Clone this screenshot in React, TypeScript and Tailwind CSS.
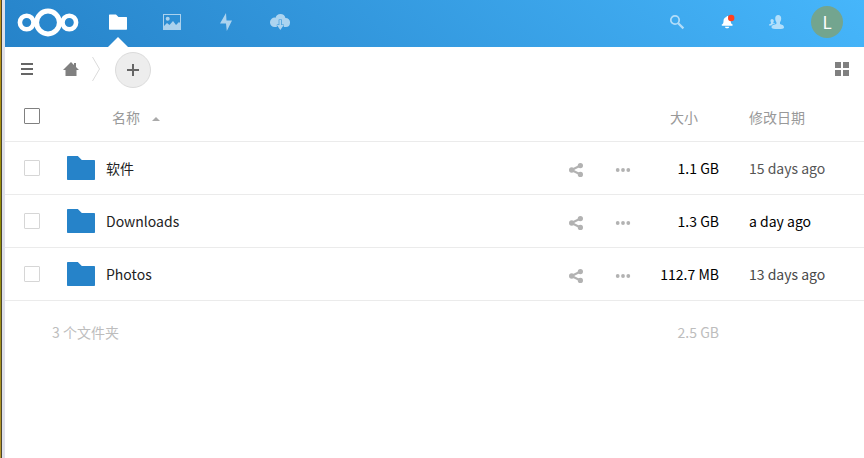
import type { ReactNode } from 'react';

type Entry = { name: string; size: string; modified: string; tone: string };

const entries: Entry[] = [
  { name: '软件', size: '1.1 GB', modified: '15 days ago', tone: 'text-[#555555]' },
  { name: 'Downloads', size: '1.3 GB', modified: 'a day ago', tone: 'text-black' },
  { name: 'Photos', size: '112.7 MB', modified: '13 days ago', tone: 'text-[#494949]' },
];

function NavItem({ label, active, children }: { label: string; active?: boolean; children: ReactNode }) {
  return (
    <a
      href="#"
      aria-label={label}
      className={`relative flex h-full w-[54px] items-center justify-center ${active ? 'opacity-100' : 'opacity-60'}`}
    >
      {children}
      {active && (
        <svg className="absolute bottom-0 left-1/2 -translate-x-1/2" width="20" height="10" viewBox="0 0 20 10" fill="#fff">
          <path d="M10 0l10 10H0z" />
        </svg>
      )}
    </a>
  );
}

function Logo() {
  return (
    <svg width="62" height="30" viewBox="0 0 62 30" fill="none" stroke="#fff">
      <circle cx="31" cy="15.500" r="11.400" strokeWidth="5" />
      <circle cx="9.700" cy="15.500" r="6.800" strokeWidth="4.600" />
      <circle cx="52.300" cy="15.500" r="6.800" strokeWidth="4.600" />
    </svg>
  );
}

function Header() {
  return (
    <header className="flex h-[47px] items-center bg-linear-40 from-[#2683c9] to-[#46b6fb] pl-3">
      <a href="#" aria-label="Nextcloud" className="mr-3 flex h-full w-[62px] items-center pb-[3px]">
        <Logo />
      </a>
      <nav className="flex h-full flex-1">
        <NavItem label="Files" active>
          <svg className="mb-1" width="20" height="20" viewBox="0 0 20 20" fill="#fff">
            <path d="M1.600 2.500a.6.600 0 0 0-.6.600v14a.6.600 0 0 0 .6.600h16.800a.6.600 0 0 0 .6-.6V5.600a.6.600 0 0 0-.6-.6H10.500L8 2.500z" />
          </svg>
        </NavItem>
        <NavItem label="Gallery">
          <svg className="mb-1" width="20" height="20" viewBox="0 0 20 20" fill="#fff">
            <path fillRule="evenodd" d="M1 2h18v16H1zM2 3v14h16V3z" />
            <circle cx="5.700" cy="6.700" r="2" />
            <path d="M2 17v-3l3-3 2.500 2L11 9l3 4 3-3 1 1v6z" />
          </svg>
        </NavItem>
        <NavItem label="Activity">
          <svg className="mb-1" width="20" height="20" viewBox="0 0 20 20" fill="#fff">
            <path d="M10 1L4 11.500h6L10.800 19 16 8.500h-5.500z" />
          </svg>
        </NavItem>
        <NavItem label="Downloader">
          <svg className="mb-1" width="20" height="20" viewBox="0 0 20 20" fill="#fff">
            <path d="M10.500 2a5 5 0 0 0-4.900 3.700A4.600 4.600 0 0 0 0 10.400 4.600 4.600 0 0 0 4.600 15h2.200v-2.500h1.900V7.400h3.200v5.100h1.900V15h2a4.300 4.300 0 0 0 4.200-4.300A4.400 4.400 0 0 0 15.400 6a5 5 0 0 0-4.900-4z" />
            <path d="M9.300 8h2v5h2.500l-3.500 5-3.500-5h2.500z" />
          </svg>
        </NavItem>
      </nav>
      <div className="flex h-full items-center pb-[3px]">
        <button aria-label="Search" className="flex h-full w-[50px] items-center justify-center opacity-60">
          <svg width="16" height="16" viewBox="0 0 16 16" fill="none" stroke="#fff">
            <circle cx="6" cy="6" r="4.200" strokeWidth="1.700" />
            <path d="M9.200 9.200l5.200 5.200" strokeWidth="2.200" />
          </svg>
        </button>
        <button aria-label="Notifications" className="flex h-full w-[50px] items-center justify-center">
          <svg width="16" height="16" viewBox="0 0 16 16" fill="#fff">
            <path d="M8.500 2c-.8 0-1 .5-1 1C5.500 3.500 4.500 5 4.500 7c0 2.200-.4 2.700-1.600 3.600-.5.400-.3 1.100.5 1.100h9.600c.8 0 1-.7.500-1.100-1.200-.9-1.800-1.400-1.800-3.600C11.700 5 10.500 3.500 9.400 3c0-.5-.2-1-.9-1zM6 12.700h4.200c0 2-4.200 2-4.200 0z" />
            <circle cx="12.200" cy="4" r="3.200" fill="#ff4020" />
          </svg>
        </button>
        <button aria-label="Contacts" className="flex h-full w-[50px] items-center justify-center opacity-60">
          <svg width="16" height="16" viewBox="0 0 16 16" fill="#fff">
            <path d="M9.200 1C7.300 1 6.200 2.300 6.200 4.500c0 1.600.5 2.800 1.200 3.600v2L4 11c-1 .4-1.500 1.300-1.500 2.400C2.500 14.600 5 15 9 15s6-.4 6-1.600c0-1.200-.6-2.200-1.600-2.500L11 10.100v-2c.7-.8 1.200-2 1.200-3.600 0-2.200-1.100-3.500-3-3.500z" />
            <path d="M3 5C2.100 5 1.500 5.800 1.500 6.800c0 .9.200 1.400.5 1.900v.7l-1.300.6c-.5.300-.7.800-.7 1.500h2.500l1.200-1.200L6 9.500V9l-1.700.2v-.5c.3-.5.500-1 .5-1.900C4.800 5.800 4 5 3 5z" />
          </svg>
        </button>
        <button aria-label="Account" className="ml-[9px] mr-[21px] flex size-8 items-center justify-center rounded-full bg-[#73a58f] pb-px text-[17px] leading-none text-white">
          L
        </button>
      </div>
    </header>
  );
}

function Toolbar() {
  return (
    <div className="flex h-11 items-center justify-between pl-4 pr-[15px]">
      <div className="flex items-center">
        <button aria-label="Menu" className="mr-[29px] flex flex-col gap-[3px]">
          <span className="h-[2px] w-3 bg-[#666666]" />
          <span className="h-[2px] w-3 bg-[#666666]" />
          <span className="h-[2px] w-3 bg-[#666666]" />
        </button>
        <a href="#" aria-label="Home">
          <svg width="18" height="16" viewBox="0 0 18 16" fill="#808080">
            <path d="M9 1L1 9h2.500v6h11V9H17l-3-3V2h-2v2z" />
          </svg>
        </a>
        <svg className="ml-3 mr-[15px]" width="8" height="24" viewBox="0 0 8 24" fill="none" stroke="#dbdbdb">
          <path d="M.5 0l7 12-7 12" />
        </svg>
        <button aria-label="New" className="mt-[2px] flex size-9 items-center justify-center rounded-full border border-[#dbdbdb] bg-[#ededed]">
          <svg width="12" height="12" viewBox="0 0 12 12" fill="#666666">
            <path d="M5 0h2v5h5v2H7v5H5V7H0V5h5z" />
          </svg>
        </button>
      </div>
      <button aria-label="Grid view" className="grid grid-cols-2 gap-[2px]">
        <span className="size-[6px] bg-[#808080]" />
        <span className="size-[6px] bg-[#808080]" />
        <span className="size-[6px] bg-[#808080]" />
        <span className="size-[6px] bg-[#808080]" />
      </button>
    </div>
  );
}

function Row({ entry }: { entry: Entry }) {
  return (
    <tr className="h-[53px] border-b border-[#ebebeb]">
      <td className="pl-[19px]">
        <input type="checkbox" aria-label={entry.name} className="block size-4 appearance-none rounded-[1px] border border-[#d6d6d6]" />
      </td>
      <td>
        <div className="flex items-center">
          <a href="#" className="flex flex-1 items-center gap-[11px] pl-[15px] text-[#222222]">
            <svg width="28" height="24" viewBox="0 0 28 24" fill="#2683c9">
              <path d="M.800 0h10l4 4h12.400a.8.800 0 0 1 .8.800v18.400a.8.800 0 0 1-.8.800H.8a.8.800 0 0 1-.8-.8V.800A.8.800 0 0 1 .8 0z" />
            </svg>
            <span>{entry.name}</span>
          </a>
          <div className="flex items-center gap-8 pt-1">
            <button aria-label="Share">
              <svg width="14" height="14" viewBox="0 0 14 14" fill="#b2b2b2">
                <path d="M2.500 7l9-4.500M2.500 7l9 4.500" stroke="#b2b2b2" strokeWidth="2" />
                <circle cx="2.700" cy="7" r="2.700" />
                <circle cx="11.400" cy="2.600" r="2.600" />
                <circle cx="11.400" cy="11.400" r="2.600" />
              </svg>
            </button>
            <button aria-label="More">
              <svg width="16" height="16" viewBox="0 0 16 16" fill="#b2b2b2">
                <circle cx="2.700" cy="8" r="1.900" />
                <circle cx="8" cy="8" r="1.900" />
                <circle cx="13.300" cy="8" r="1.900" />
              </svg>
            </button>
          </div>
        </div>
      </td>
      <td className="text-right text-black">{entry.size}</td>
      <td className={`pl-[30px] ${entry.tone}`}>{entry.modified}</td>
    </tr>
  );
}

export default function App() {
  return (
    <div className="flex min-h-screen bg-white font-['Noto_Sans_CJK_SC',sans-serif] text-[14px] leading-5">
      <div className="flex w-[5px] shrink-0 bg-[#dfe0ea]">
        <div className="w-px bg-linear-to-b from-[#c8961c] via-[#8f8a00] to-[#b8952a]" />
        <div className="w-px bg-[#4a4530]" />
      </div>
      <div className="min-w-0 flex-1">
        <Header />
        <Toolbar />
        <table className="w-full table-fixed border-collapse text-left">
          <colgroup>
            <col className="w-[47px]" />
            <col />
            <col className="w-[88px]" />
            <col className="w-[145px]" />
          </colgroup>
          <thead>
            <tr className="h-[50px] border-b border-[#ebebeb] text-[#999999]">
              <th className="pl-[19px] font-normal">
                <input type="checkbox" aria-label="Select all" className="block size-4 appearance-none rounded-[1px] border border-[#808080]" />
              </th>
              <th className="pl-[60px] pt-[2px] font-normal">
                <button className="flex items-center gap-3">
                  名称
                  <svg className="mt-1" width="8" height="4" viewBox="0 0 8 4" fill="#aaaaaa">
                    <path d="M4 0l4 4H0z" />
                  </svg>
                </button>
              </th>
              <th className="pr-[21px] pt-[2px] text-right font-normal">
                <button>大小</button>
              </th>
              <th className="pl-[30px] pt-[2px] font-normal">
                <button>修改日期</button>
              </th>
            </tr>
          </thead>
          <tbody>
            {entries.map((entry) => (
              <Row key={entry.name} entry={entry} />
            ))}
          </tbody>
          <tfoot>
            <tr className="h-16 text-[#bdbdbd]">
              <td />
              <td>3 个文件夹</td>
              <td className="text-right">2.5 GB</td>
              <td />
            </tr>
          </tfoot>
        </table>
      </div>
    </div>
  );
}
